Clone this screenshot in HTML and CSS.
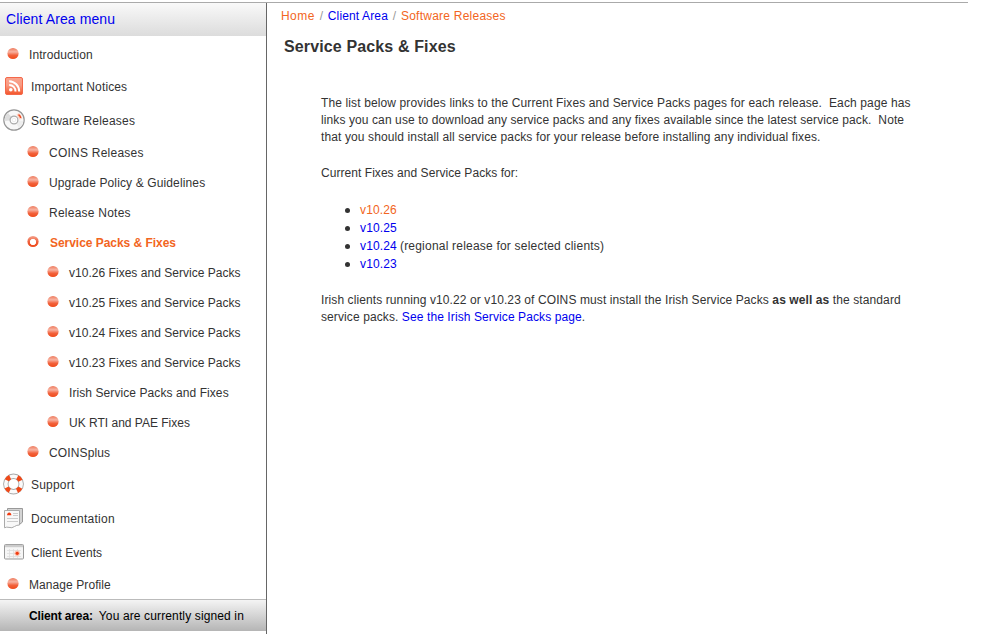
FILE: index.html
```
<!DOCTYPE html>
<html lang="en">
<head>
<meta charset="utf-8">
<title>Service Packs &amp; Fixes</title>
<link rel="stylesheet" href="styles.css">
</head>
<body>
<div class="page">
  <aside class="sidebar">
    <h2 class="menu-title">Client Area menu</h2>
    <ul class="menu">
      <li class="item"><i class="dot"></i><span class="s1">Introduction</span></li>
      <li class="item tall">
        <svg class="icon" width="24" height="24" viewBox="0 0 24 24">
          <defs><linearGradient id="rss" x2="0" y2="1"><stop stop-color="#f9a48f"/><stop offset=".45" stop-color="#f89a82"/><stop offset="1" stop-color="#f4552a"/></linearGradient></defs>
          <rect x="3.5" y="2.5" width="17" height="17" rx="1.5" fill="url(#rss)" stroke="#f4684a"/>
          <circle cx="8.800" cy="14.700" r="1.800" fill="#fff"/>
          <path d="M7.200 9.900a6.300 6.300 0 0 1 6.300 6.600M7.200 6.200a10.200 10.200 0 0 1 10 10.300" fill="none" stroke="#fff" stroke-width="2"/>
        </svg><span class="s2">Important Notices</span></li>
      <li class="item tall">
        <svg class="icon" width="24" height="24" viewBox="0 0 24 24">
          <circle cx="12" cy="11" r="10.2" fill="#f8f8f8" stroke="#969696" stroke-width="1.2"/>
          <path d="M12 11 2.700 12a9.300 9.300 0 0 1 3.300-8z" fill="#ddd"/>
          <path d="M12 11l9.300 1a9.300 9.300 0 0 1-4.300 7z" fill="#eee"/>
          <path d="M14.500 5.500l2.500-1.500a9 9 0 0 1 3.300 6l-3 .5z" fill="#fbd5c8"/>
          <path d="M16.500 5.600q2 1.400 2.200 3.400" fill="none" stroke="#f04a20" stroke-width="1.500"/>
          <circle cx="12" cy="11" r="3.900" fill="#fff" stroke="#aaa" stroke-width="1.200"/>
          <circle cx="12" cy="11" r="1.800" fill="#fff" stroke="#ddd" stroke-width=".5"/>
        </svg><span class="s3">Software Releases</span></li>
      <li class="item sub"><i class="dot"></i><span class="s4">COINS Releases</span></li>
      <li class="item sub"><i class="dot"></i><span class="s2">Upgrade Policy &amp; Guidelines</span></li>
      <li class="item sub"><i class="dot"></i><span class="s4">Release Notes</span></li>
      <li class="item sub current"><i class="dot ring"></i><span>Service Packs &amp; Fixes</span></li>
      <li class="item deep"><i class="dot"></i><span class="s0">v10.26 Fixes and Service Packs</span></li>
      <li class="item deep"><i class="dot"></i><span class="s0">v10.25 Fixes and Service Packs</span></li>
      <li class="item deep"><i class="dot"></i><span class="s0">v10.24 Fixes and Service Packs</span></li>
      <li class="item deep"><i class="dot"></i><span class="s0">v10.23 Fixes and Service Packs</span></li>
      <li class="item deep"><i class="dot"></i><span class="s1">Irish Service Packs and Fixes</span></li>
      <li class="item deep"><i class="dot"></i><span>UK RTI and PAE Fixes</span></li>
      <li class="item sub"><i class="dot"></i><span class="s2">COINSplus</span></li>
      <li class="item tall">
        <svg class="icon" width="24" height="24" viewBox="0 0 24 24">
          <circle cx="11.500" cy="11" r="7.700" fill="none" stroke="#a8a8a8" stroke-width="5.400"/>
          <circle cx="11.500" cy="11" r="7.700" fill="none" stroke="#fafafa" stroke-width="3.600"/>
          <circle cx="11.500" cy="11" r="7.700" fill="none" stroke="#f04818" stroke-width="4.600" stroke-dasharray="4.600 7.495" stroke-dashoffset="-3.747"/>
        </svg><span class="s3">Support</span></li>
      <li class="item tall">
        <svg class="icon" width="24" height="24" viewBox="0 0 24 24">
          <path d="M5.500 3.500v-2h15v13.500l-3 2.500" fill="#d4d4d4" stroke="#999"/>
          <path d="M2.500 3.500h15V18q-3 0-5 1.500-2.500 2-5.500.9-2.500-.7-4.500.4z" fill="#f8f8f8" stroke="#aaa"/>
          <path d="M5 8.300c.2-2 1-2.900 2.200-2.900s2 .9 2.200 2.900z" fill="#f03a10"/>
          <path d="M11 6.500h5M11 8.500h5M5 11.500h11M5 14.500h11" stroke="#ccc"/>
        </svg><span class="s4">Documentation</span></li>
      <li class="item tall">
        <svg class="icon" width="24" height="24" viewBox="0 0 24 24">
          <rect x="2.500" y="3.500" width="19" height="14.500" rx="1" fill="#f6f6f6" stroke="#999"/>
          <path d="M3 5h18" stroke="#ccc" stroke-width="2.400"/>
          <path d="M5 9.500h14M5 12.500h14M5 15.500h14M7.500 8v9M11.500 8v9M15.500 8v9" stroke="#ddd" stroke-width=".8"/>
          <circle cx="15.200" cy="12.300" r="2.700" fill="#f9c0ae"/>
          <circle cx="15.200" cy="12.300" r="1.600" fill="#f03a10"/>
        </svg><span class="s0">Client Events</span></li>
      <li class="item"><i class="dot"></i><span class="s1">Manage Profile</span></li>
    </ul>
    <div class="status"><b>Client area:</b><span class="s2">You are currently signed in</span></div>
  </aside>
  <main class="content">
    <nav class="crumbs"><a class="hot home">Home</a><i>/</i><a class="area">Client Area</a><i>/</i><a class="hot s4">Software Releases</a></nav>
    <h1>Service Packs &amp; Fixes</h1>
    <div class="copy">
      <p><span class="l1">The list below provides links to the Current Fixes and Service Packs pages for each release.&nbsp; Each page has</span><br><span class="l2">links you can use to download any service packs and any fixes available since the latest service pack.&nbsp; Note</span><br><span class="l3">that you should install all service packs for your release before installing any individual fixes.</span></p>
      <p><span class="l4">Current Fixes and Service Packs for:</span></p>
      <ul class="versions">
        <li><a class="hot">v10.26</a></li>
        <li><a>v10.25</a></li>
        <li><a>v10.24</a> <span class="note">(regional release for selected clients)</span></li>
        <li><a>v10.23</a></li>
      </ul>
      <p><span class="l2">Irish clients running v10.22 or v10.23 of COINS must install the Irish Service Packs <b>as well as</b> the standard</span><br><span class="l2">service packs. <a>See the Irish Service Packs page</a>.</span></p>
    </div>
  </main>
</div>
</body>
</html>
```
FILE: styles.css
```
* { box-sizing: border-box; }
body { margin: 0; background: #fff; color: #333; font: 12px/17px "Liberation Sans", Arial, sans-serif; overflow: hidden; }
ul, p, h1, h2 { margin: 0; padding: 0; }
ul { list-style: none; }
a { color: #00e; }
a.hot { color: #f26522; }
.page { width: 968px; height: 632px; margin-top: 2px; border-top: 1px solid #aaa; display: flex; }
.sidebar { width: 267px; border-right: 1px solid #666; }
.menu-title { height: 33px; padding-left: 6px; font-size: 14px; font-weight: 400; line-height: 32px; letter-spacing: .11px; color: #00e; background: linear-gradient(#f9f9f9, #dcdcdc); }
.menu { padding-top: 4px; height: 563px; }
.item { height: 30px; padding-left: 7px; display: flex; align-items: center; white-space: nowrap; }
.item.tall { height: 34px; padding-left: 2px; }
.item.sub { padding-left: 27px; }
.item.deep { padding-left: 47px; }
.icon { width: 24px; height: 24px; margin-right: 5px; flex: none; }
.dot { width: 12px; height: 12px; margin: -3px 10px 0 0; clip-path: circle(5.6px); flex: none; background: linear-gradient(#ee7a5c, #f8b3a2 32%, #f2623c 60%, #ef4512); }
.dot.ring { background: radial-gradient(circle, #fff 2.8px, transparent 3.4px), linear-gradient(#f4a08a, #ef5a34 55%, #ef4512); }
.current { color: #f26522; font-weight: 700; }
.current span { padding-left: 1px; letter-spacing: -.04px; }
.s0 { letter-spacing: .03px; }
.s1 { letter-spacing: .08px; }
.s2 { letter-spacing: .13px; }
.s3 { letter-spacing: .2px; }
.s4 { letter-spacing: .24px; }
.status { height: 32px; border-top: 1px solid #bbb; padding-left: 29px; line-height: 32px; color: #000; background: linear-gradient(#f4f4f4, #b5b5b5); display: flex; gap: 6px; }
.status b { letter-spacing: -.13px; }
.content { padding: 5px 0 0 14px; }
.crumbs { display: flex; }
.crumbs i { color: #999; font-style: normal; width: 13px; text-align: center; }
.home { letter-spacing: .45px; }
.area { letter-spacing: .13px; }
h1 { margin: 12px 0 0 3px; font-size: 16px; line-height: 20px; letter-spacing: .13px; color: #333; }
.copy { padding: 38px 0 0 40px; white-space: nowrap; }
.copy p { margin-bottom: 19px; }
.l1 { letter-spacing: .125px; }
.l2 { letter-spacing: .1px; }
.l3 { letter-spacing: .115px; }
.l4 { letter-spacing: .05px; }
.note { letter-spacing: .21px; }
.versions { padding-left: 39px; margin-bottom: 19px; }
.versions li { height: 18px; line-height: 18px; letter-spacing: .15px; display: flex; gap: 3px; }
.versions li::before { content: ""; width: 5px; height: 5px; border-radius: 50%; background: #333; margin: 7px 7px 0 -15px; }
```
